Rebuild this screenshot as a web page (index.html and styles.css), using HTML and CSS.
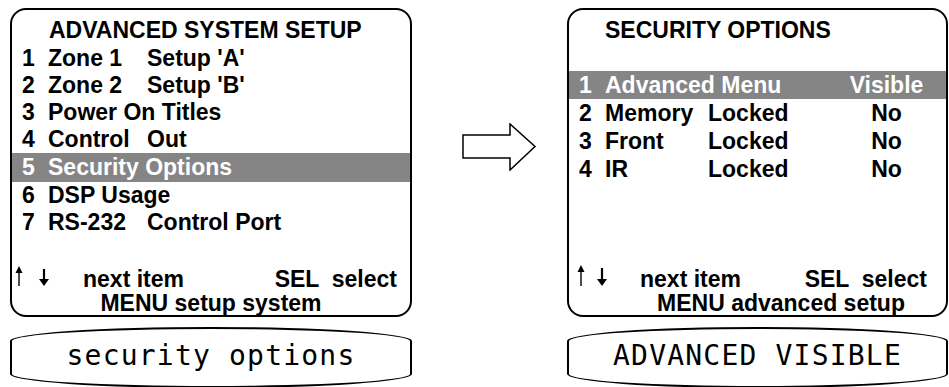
FILE: index.html
```html
<!DOCTYPE html>
<html lang="en">
<head>
  <meta charset="UTF-8" />
  <title>Advanced Setup - Security Options</title>
  <link rel="stylesheet" href="styles.css">
</head>
<body>
  <div class="layout">
    <div class="panel panel-left">
      <div class="screen screen-left">
        <div class="title">ADVANCED SYSTEM SETUP</div>
        <ul class="menu">
          <li class="row"><span class="num">1</span><span class="name">Zone 1</span><span>Setup 'A'</span></li>
          <li class="row"><span class="num">2</span><span class="name">Zone 2</span><span>Setup 'B'</span></li>
          <li class="row"><span class="num">3</span><span>Power On Titles</span></li>
          <li class="row"><span class="num">4</span><span class="name">Control</span><span>Out</span></li>
          <li class="row active"><span class="num">5</span><span>Security Options</span></li>
          <li class="row"><span class="num">6</span><span>DSP Usage</span></li>
          <li class="row"><span class="num">7</span><span class="name">RS-232</span><span>Control Port</span></li>
        </ul>
        <div class="hints">
          <div class="hint-line">
            <svg class="keys" viewBox="0 0 44 24" width="44" height="24">
              <line x1="7" y1="22" x2="7" y2="5" stroke="#000" stroke-width="1.4"/>
              <path d="M3.5 9 L7 2 L10.5 9 Z" fill="#000"/>
              <line x1="32" y1="5" x2="32" y2="16" stroke="#000" stroke-width="2.2"/>
              <path d="M27 15 L37 15 L32 22 Z" fill="#000"/>
            </svg>
            <span class="next">next item</span>
            <span class="sel">SEL  select</span>
          </div>
          <div class="menu-line">MENU setup system</div>
        </div>
      </div>
      <div class="pill">security options</div>
    </div>

    <svg class="flow-arrow" viewBox="0 0 75 48" width="75" height="48">
      <path d="M1 12 L48 12 L48 1 L73 23.5 L48 47 L48 35 L1 35 Z" fill="#fff" stroke="#000" stroke-width="1.5"/>
    </svg>

    <div class="panel panel-right">
      <div class="screen screen-right">
        <div class="title">SECURITY OPTIONS</div>
        <ul class="menu options">
          <li class="row active"><span class="num">1</span><span class="name wide">Advanced Menu</span><span class="val">Visible</span></li>
          <li class="row"><span class="num">2</span><span class="name">Memory</span><span class="lock">Locked</span><span class="val">No</span></li>
          <li class="row"><span class="num">3</span><span class="name">Front</span><span class="lock">Locked</span><span class="val">No</span></li>
          <li class="row"><span class="num">4</span><span class="name">IR</span><span class="lock">Locked</span><span class="val">No</span></li>
        </ul>
        <div class="hints">
          <div class="hint-line">
            <svg class="keys" viewBox="0 0 44 24" width="44" height="24">
              <line x1="12" y1="22" x2="12" y2="4" stroke="#000" stroke-width="1.4"/>
              <path d="M8.5 8 L12 1 L15.5 8 Z" fill="#000"/>
              <line x1="33" y1="4" x2="33" y2="16" stroke="#000" stroke-width="2.2"/>
              <path d="M28 15 L38 15 L33 22 Z" fill="#000"/>
            </svg>
            <span class="next">next item</span>
            <span class="sel">SEL  select</span>
          </div>
          <div class="menu-line">MENU advanced setup</div>
        </div>
      </div>
      <div class="pill">ADVANCED VISIBLE</div>
    </div>
  </div>
</body>
</html>
```

FILE: styles.css
```css
* {
  box-sizing: border-box;
  margin: 0;
  padding: 0;
}
html, body {
  overflow: hidden;
}
body {
  font-family: "Liberation Sans", Arial, sans-serif;
  font-weight: bold;
  font-size: 23px;
  color: #000;
  background: #fff;
  padding: 8px 0 0 10px;
}
.layout {
  display: flex;
  align-items: flex-start;
}
.panel-left {
  width: 402px;
}
.panel-right {
  width: 381px;
}
.flow-arrow {
  display: block;
  margin: 115px 30px 0 50px;
}
.screen {
  height: 309px;
  border: 2px solid #000;
  border-radius: 16px;
  padding-top: 6px;
  display: flex;
  flex-direction: column;
}
.title {
  line-height: 29px;
  padding-left: 37px;
}
.screen-right .title {
  padding-left: 36px;
}
.menu {
  list-style: none;
}
.row {
  display: flex;
  line-height: 27px;
  padding-left: 10px;
  white-space: pre;
}
.row.active {
  background: #858585;
  color: #fff;
  line-height: 29px;
}
.num {
  width: 26px;
}
.name {
  width: 99px;
}
.options {
  margin-top: 26px;
}
.options .row {
  line-height: 28px;
}
.options .name {
  width: 103px;
}
.options .name.wide {
  width: 243px;
}
.lock {
  width: 140px;
}
.val {
  width: 77px;
  text-align: center;
}
.hints {
  margin-top: auto;
}
.hint-line {
  display: flex;
  align-items: flex-end;
  line-height: 24px;
  padding-right: 13px;
  white-space: pre;
}
.screen-right .hint-line {
  padding-right: 19px;
}
.keys {
  display: block;
  margin-bottom: 3px;
}
.next {
  margin-left: 27px;
}
.sel {
  margin-left: auto;
}
.menu-line {
  line-height: 24px;
  text-align: center;
}
.screen-right .menu-line {
  padding-left: 47px;
}
.pill {
  margin-top: 10px;
  height: 61px;
  border: 2px solid #000;
  border-radius: 50% / 14px;
  padding-top: 12px;
  font-family: "DejaVu Sans Mono", "Liberation Mono", monospace;
  font-weight: normal;
  font-size: 28px;
  letter-spacing: 1.2px;
  line-height: 30px;
  text-align: center;
}
```
